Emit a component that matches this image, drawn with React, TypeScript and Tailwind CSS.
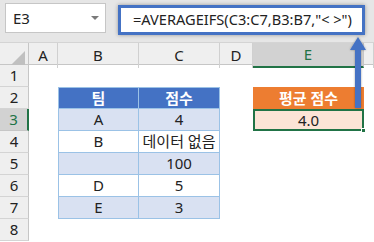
import React from 'react';

const font = { fontFamily: '"Noto Sans", "Noto Sans CJK KR", sans-serif' };

const cols = ['A', 'B', 'C', 'D', 'E', ''];
const data: [string, string][] = [
    ['A', '4'],
    ['B', '데이터 없음'],
    ['', '100'],
    ['D', '5'],
    ['E', '3'],
];

const App: React.FC = () => {
    return (
        <div className="relative w-[374px] h-[242px] overflow-hidden bg-white text-[#222]" style={font}>
            {/* formula bar */}
            <div className="h-[43px] bg-[#e6e6e6] border-b border-[#d4d4d4] relative">
                <div className="absolute left-[5px] top-[3px] w-[101px] h-[30px] bg-white border border-[#c6c6c6] flex items-center pl-[7px] text-[15px]">
                    E3
                    <span className="absolute right-[6px] top-[12px] w-0 h-0 border-l-[4px] border-r-[4px] border-t-[4px] border-l-transparent border-r-transparent border-t-[#7a7a7a]" />
                </div>
                <div className="absolute left-[118px] top-[5px] w-[247px] h-[30px] bg-white border-[3px] border-[#4472c4] shadow-[0_0_4px_rgba(0,0,0,0.35)] flex items-center pl-[12px] text-[14.6px] whitespace-nowrap">
                    =AVERAGEIFS(C3:C7,B3:B7,"&lt; &gt;")
                </div>
            </div>

            {/* column headers */}
            <div className="grid grid-cols-[29px_29px_81px_81px_33px_111px_1fr] h-[22px] bg-[#efefef] border-b border-[#c6c6c6] text-[15px]">
                <div className="relative border-r border-[#c6c6c6]">
                    <span className="absolute right-[3px] bottom-[3px] w-0 h-0" style={{ borderBottom: '14px solid #c0c0c0', borderLeft: '14px solid transparent' }} />
                </div>
                {cols.map((c, i) => (
                    <div
                        key={i}
                        className={
                            c === 'E'
                                ? 'flex items-center justify-center bg-[#d2d2d2] border-b-2 border-[#217346] text-[#217346] border-r border-r-[#c6c6c6]'
                                : 'flex items-center justify-center border-r border-[#d0d0d0]'
                        }
                    >
                        {c}
                    </div>
                ))}
            </div>

            {/* rows */}
            <div className="grid grid-cols-[29px_29px_81px_81px_33px_111px_1fr] grid-rows-[repeat(8,22px)] text-[15px]">
                {[1, 2, 3, 4, 5, 6, 7, 8].map(r => {
                    const rowHead = (
                        <div
                            key={`h${r}`}
                            className={
                                r === 3
                                    ? 'flex items-center justify-center bg-[#d2d2d2] border-b border-[#c6c6c6] border-r-2 border-r-[#217346] text-[#217346]'
                                    : 'flex items-center justify-center bg-[#efefef] border-b border-[#d4d4d4] border-r border-r-[#c6c6c6]'
                            }
                        >
                            {r}
                        </div>
                    );
                    const cells: React.ReactNode[] = [rowHead, <div key={`a${r}`} />];
                    if (r === 2) {
                        cells.push(
                            <div key="b2" className="flex items-center justify-center bg-[#4472c4] text-white font-bold border border-[#9bc2e6]">팀</div>,
                            <div key="c2" className="flex items-center justify-center bg-[#4472c4] text-white font-bold border-t border-r border-b border-[#9bc2e6]">점수</div>
                        );
                    } else if (r >= 3 && r <= 7) {
                        const [b, c] = data[r - 3];
                        const bg = r % 2 === 1 ? 'bg-[#d9e1f2]' : 'bg-white';
                        cells.push(
                            <div key={`b${r}`} className={`flex items-center justify-center ${bg} border-l border-r border-b border-[#9bc2e6]`}>{b}</div>,
                            <div key={`c${r}`} className={`flex items-center justify-center ${bg} border-r border-b border-[#9bc2e6] whitespace-nowrap`}>{c}</div>
                        );
                    } else {
                        cells.push(<div key={`b${r}`} />, <div key={`c${r}`} />);
                    }
                    cells.push(<div key={`d${r}`} />);
                    if (r === 2) {
                        cells.push(<div key="e2" className="flex items-center justify-center bg-[#ed7d31] text-white font-bold">평균 점수</div>);
                    } else if (r === 3) {
                        cells.push(
                            <div key="e3" className="relative flex items-center justify-center bg-[#fce4d6] border-2 border-[#217346]">
                                4.0
                                <span className="absolute right-[-4px] bottom-[-4px] w-[5px] h-[5px] bg-[#217346] border border-white" />
                            </div>
                        );
                    } else {
                        cells.push(<div key={`e${r}`} />);
                    }
                    cells.push(<div key={`f${r}`} />);
                    return cells;
                })}
            </div>

            {/* arrow from cell to formula */}
            <svg className="absolute left-[348px] top-[34px]" width="22" height="78" viewBox="0 0 22 78">
                <defs>
                    <filter id="sh" x="-50%" y="-20%" width="200%" height="140%">
                        <feDropShadow dx="0" dy="0" stdDeviation="1" floodColor="#000" floodOpacity="0.35" />
                    </filter>
                </defs>
                <g filter="url(#sh)" fill="#4472c4">
                    <polygon points="10,3 18,16 13,16 13,74 7,74 7,16 2,16" />
                </g>
            </svg>
        </div>
    );
};

export default App;
